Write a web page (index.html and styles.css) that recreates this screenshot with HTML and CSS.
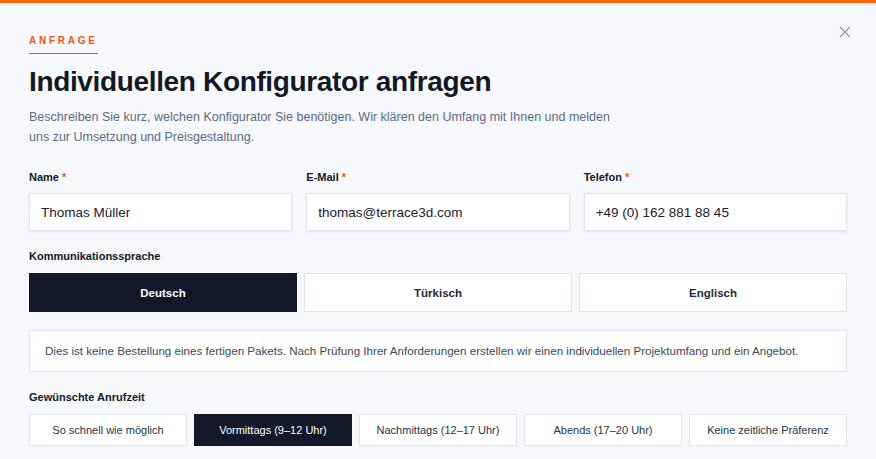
FILE: index.html
```html
<!DOCTYPE html>
<html lang="de">
<head>
    <meta charset="UTF-8">
    <meta name="viewport" content="width=device-width, initial-scale=1.0">
    <title>Konfigurator anfragen</title>
    <link rel="stylesheet" href="styles.css">
</head>
<body>
    <div class="modal">
        <button class="close" aria-label="Schließen">
            <svg width="12" height="12" viewBox="0 0 12 12"><path d="M1 1L11 11M11 1L1 11" stroke="#8a94a8" stroke-width="1.3" fill="none"/></svg>
        </button>

        <div class="eyebrow">ANFRAGE</div>
        <h1>Individuellen Konfigurator anfragen</h1>
        <p class="lead">Beschreiben Sie kurz, welchen Konfigurator Sie benötigen. Wir klären den Umfang mit Ihnen und melden uns zur Umsetzung und Preisgestaltung.</p>

        <!-- Kontaktdaten -->
        <div class="fields">
            <div class="field">
                <label>Name <span class="req">*</span></label>
                <input type="text" value="Thomas Müller">
            </div>
            <div class="field">
                <label>E-Mail <span class="req">*</span></label>
                <input type="text" value="thomas@terrace3d.com">
            </div>
            <div class="field">
                <label>Telefon <span class="req">*</span></label>
                <input type="text" value="+49 (0) 162 881 88 45">
            </div>
        </div>

        <label class="group-label">Kommunikationssprache</label>
        <div class="options lang">
            <button class="active">Deutsch</button>
            <button>Türkisch</button>
            <button>Englisch</button>
        </div>

        <div class="note">Dies ist keine Bestellung eines fertigen Pakets. Nach Prüfung Ihrer Anforderungen erstellen wir einen individuellen Projektumfang und ein Angebot.</div>

        <label class="group-label">Gewünschte Anrufzeit</label>
        <div class="options time">
            <button>So schnell wie möglich</button>
            <button class="active">Vormittags (9–12 Uhr)</button>
            <button>Nachmittags (12–17 Uhr)</button>
            <button>Abends (17–20 Uhr)</button>
            <button>Keine zeitliche Präferenz</button>
        </div>
    </div>
</body>
</html>
```

FILE: styles.css
```css
* {
    box-sizing: border-box;
}

body {
    margin: 0;
    font-family: 'Liberation Sans', Arial, sans-serif;
    background: #f7f8fc;
    color: #111827;
}

.modal {
    position: relative;
    border-top: 3px solid #ff6510;
    padding: 32px 29px 20px;
    min-height: 459px;
}

.close {
    position: absolute;
    top: 23px;
    right: 25px;
    background: none;
    border: none;
    padding: 0;
    cursor: pointer;
}

/* small orange kicker above the title */
.eyebrow {
    width: fit-content;
    color: #f0580f;
    font-size: 10px;
    line-height: 12px;
    font-weight: bold;
    letter-spacing: 2.75px;
    padding-bottom: 6px;
    border-bottom: 1px solid #f0580f;
}

h1 {
    margin: 10px 0 0;
    font-size: 28px;
    line-height: 36px;
    font-weight: bold;
    color: #111827;
    letter-spacing: -0.35px;
}

.lead {
    margin: 7px 0 0;
    max-width: 600px;
    font-size: 12.5px;
    line-height: 20px;
    color: #5b6b86;
}

.fields {
    display: grid;
    grid-template-columns: repeat(3, 1fr);
    gap: 14px;
    margin-top: 24px;
}

.field label,
.group-label {
    display: block;
    font-size: 11px;
    line-height: 13px;
    font-weight: bold;
    color: #111827;
    margin-bottom: 9px;
}

.req {
    color: #f0580f;
}

input[type="text"] {
    width: 100%;
    height: 38px;
    padding: 0 11px;
    border: 1px solid #dfe4ee;
    background: #fff;
    font-family: inherit;
    font-size: 13.5px;
    color: #1a2030;
    box-shadow: 0 1px 2px rgba(20, 30, 60, 0.08);
    outline: none;
}

.group-label {
    margin-top: 19px;
    margin-bottom: 10px;
}

.options {
    display: grid;
    gap: 7px;
}

.options button {
    background: #fff;
    border: 1px solid #dfe4ee;
    font-family: inherit;
    color: #1f2937;
    cursor: pointer;
}

.options button.active {
    background: #121828;
    border-color: #121828;
    color: #fff;
}

.lang {
    grid-template-columns: repeat(3, 1fr);
}

.lang button {
    height: 39px;
    font-size: 11.5px;
    font-weight: bold;
}

.time {
    grid-template-columns: repeat(5, 1fr);
}

.time button {
    height: 32px;
    font-size: 11px;
    color: #2a3344;
}

.note {
    margin-top: 18px;
    background: #fff;
    border: 1px solid #dfe4ee;
    padding: 13px 15px;
    font-size: 11.6px;
    line-height: 14px;
    color: #3d4759;
}
```
